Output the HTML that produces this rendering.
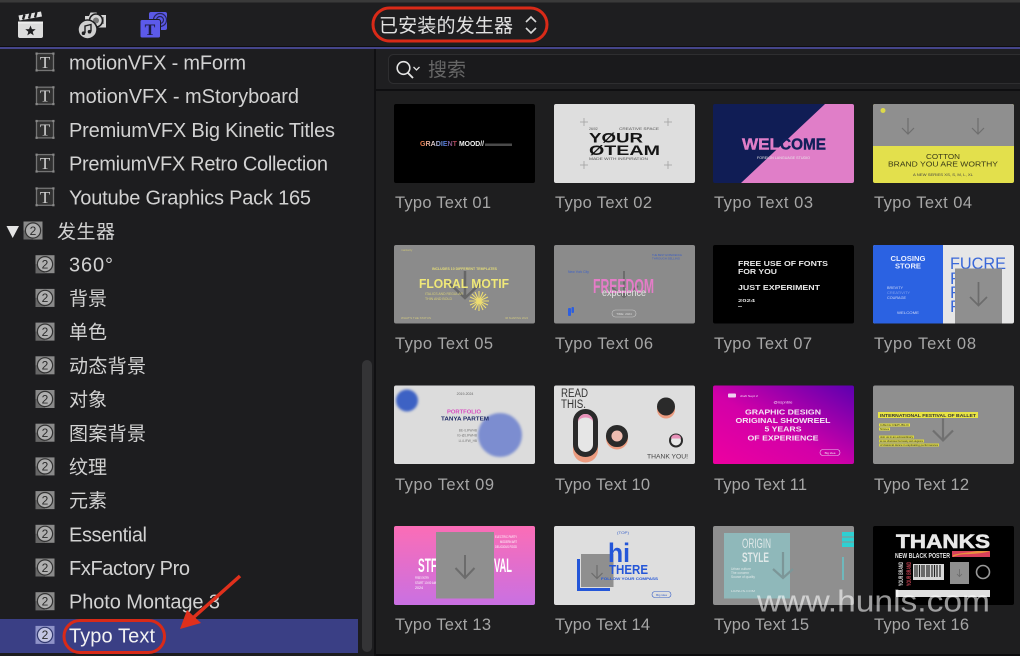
<!DOCTYPE html>
<html lang="zh"><head><meta charset="utf-8"><title>Generators</title>
<style>
html,body{margin:0;padding:0;background:#1c1c1e;width:1020px;height:656px;overflow:hidden}
svg{display:block}
text{font-family:"Liberation Sans","Noto Sans CJK SC",sans-serif}
.r{font-size:20px;fill:#d2d2d2}
.c{font-size:19px;fill:#d2d2d2;font-family:"Liberation Sans","Noto Sans CJK SC",sans-serif}
.l{font-size:16.500px;fill:#a6a6a6}
.two{font-size:12px;fill:#2c2c2c;text-anchor:middle}
.tt{font-family:"Liberation Serif",serif;font-size:17px;fill:#cfcfcf;text-anchor:middle}
.b{font-weight:bold}
.m{text-anchor:middle}
</style></head><body>
<svg width="1020" height="656" viewBox="0 0 1020 656" xmlns="http://www.w3.org/2000/svg">
<defs>
<g id="gen"><rect x="-9.500" y="-9" width="19" height="18" fill="#8a8a8a"/><rect x="-9.500" y="0" width="9.500" height="9" fill="#686868"/><circle r="7.600" fill="#b0b0b0" stroke="#333" stroke-width="1.200"/></g>
<g id="tf"><rect x="-8.500" y="-8.500" width="17" height="17" fill="#303030" stroke="#747474" stroke-width="1.300"/><g fill="#8a8a8a"><rect x="-9.500" y="-9.500" width="2.200" height="2.200"/><rect x="7.300" y="-9.500" width="2.200" height="2.200"/><rect x="-9.500" y="7.300" width="2.200" height="2.200"/><rect x="7.300" y="7.300" width="2.200" height="2.200"/></g></g>
<filter id="bl"><feGaussianBlur stdDeviation="1.400"/></filter>
<linearGradient id="g11" x1="0" y1="1" x2="1" y2="0"><stop offset="0" stop-color="#ee00a0"/><stop offset=".45" stop-color="#d200a8"/><stop offset="1" stop-color="#5c00b0"/></linearGradient>
<linearGradient id="g13" x1="0" y1="0" x2="0" y2="1"><stop offset="0" stop-color="#fb6db6"/><stop offset="1" stop-color="#c970e2"/></linearGradient>
<linearGradient id="gr" x1="0" y1="0" x2="1" y2="0"><stop offset="0" stop-color="#e8703a"/><stop offset=".35" stop-color="#e0d0d0"/><stop offset=".65" stop-color="#4a78d8"/><stop offset="1" stop-color="#c03a3a"/></linearGradient>
</defs>

<rect width="1020" height="656" fill="#1d1d1f"/>
<!-- top bar -->
<rect width="1020" height="47" fill="#1e1e20"/>
<rect width="1020" height="2.500" fill="#3a3a3a"/>
<rect y="46" width="1020" height="1.500" fill="#0e0e10"/>
<rect y="47" width="1020" height="2" fill="#45458a"/>

<!-- clapper -->
<path d="M18.500 15.500L41 11.500L42 16.500L19.500 20.500Z" fill="#e2e2e2"/>
<path d="M23 19.500l1.500-5M29 18.500l1.500-5.500M35 17.500l1.500-5.500" stroke="#1e1e20" stroke-width="2.300" fill="none"/>
<path d="M18 23.500H43V36a2 2 0 0 1-2 2H20a2 2 0 0 1-2-2Z" fill="#dcdcdc"/>
<rect x="18" y="21.500" width="25" height="2" fill="#eee"/>
<path d="M30.500 25.500l1.400 3.600 3.800.2-3 2.400 1 3.700-3.200-2.100-3.200 2.100 1-3.700-3-2.400 3.800-.2Z" fill="#1e1e20"/>
<!-- photos / music -->
<path d="M85 16h4l1.500-3.500h6L98 15h8v12.500H85Z" fill="#d4d4d4"/>
<rect x="101.500" y="17" width="2.500" height="7" fill="#888"/>
<circle cx="96" cy="20.500" r="6.500" fill="#d4d4d4" stroke="#1e1e20" stroke-width="1.600"/>
<circle cx="96" cy="20.500" r="3" fill="#777"/>
<circle cx="87.500" cy="29.500" r="9.500" fill="#cfcfcf" stroke="#1e1e20" stroke-width="1.500"/>
<path d="M85 33V26l6-1.500V31.500" fill="none" stroke="#1e1e20" stroke-width="1.400"/>
<circle cx="83.500" cy="33.200" r="1.800" fill="#1e1e20"/><circle cx="89.500" cy="31.700" r="1.800" fill="#1e1e20"/>
<!-- titles / generators -->
<rect x="149" y="12" width="18" height="18" rx="2" fill="#5a58e4"/>
<circle cx="160" cy="20" r="6.500" fill="none" stroke="#26265e" stroke-width="1.200"/>
<circle cx="160" cy="20" r="3.500" fill="none" stroke="#26265e" stroke-width="1.200"/>
<rect x="140" y="19.500" width="20.500" height="18.500" rx="2" fill="#5c5aea" stroke="#1e1e20" stroke-width="1"/>
<text x="150" y="35" class="b" style="font-family:'Liberation Serif',serif;font-size:16px;fill:#1c1c40;text-anchor:middle">T</text>

<!-- header title -->
<text x="379" y="32" class="c" style="fill:#e2e2e2" textLength="134">已安装的发生器</text>
<path d="M526 22l5-5 5 5M526 28l5 5 5-5" fill="none" stroke="#d8d8d8" stroke-width="1.600"/>
<rect x="373" y="8" width="174" height="33" rx="16.500" fill="none" stroke="#d92a18" stroke-width="3"/>

<!-- sidebar -->
<rect y="619" width="358" height="34" fill="#3a3f85"/>
<rect x="362" y="360" width="10" height="292" rx="5" fill="#343436"/>
<rect x="374" y="49" width="2" height="607" fill="#101012"/>

<g transform="translate(45,62)"><use href="#tf"/><text y="6" class="tt">T</text></g>
<g transform="translate(45,95.700)"><use href="#tf"/><text y="6" class="tt">T</text></g>
<g transform="translate(45,129.400)"><use href="#tf"/><text y="6" class="tt">T</text></g>
<g transform="translate(45,163.100)"><use href="#tf"/><text y="6" class="tt">T</text></g>
<g transform="translate(45,196.800)"><use href="#tf"/><text y="6" class="tt">T</text></g>
<text x="69" y="69.500" class="r" textLength="177">motionVFX - mForm</text>
<text x="69" y="103.200" class="r" textLength="230">motionVFX - mStoryboard</text>
<text x="69" y="136.900" class="r" textLength="266">PremiumVFX Big Kinetic Titles</text>
<text x="69" y="170.600" class="r" textLength="259">PremiumVFX Retro Collection</text>
<text x="69" y="204.300" class="r" textLength="242">Youtube Graphics Pack 165</text>

<path d="M6.500 226H19L12.700 238Z" fill="#e4e4e4"/>
<g transform="translate(33,230.500)"><use href="#gen"/><text y="4.300" class="two">2</text></g>
<text x="57" y="238" class="c" textLength="58">发生器</text>

<g transform="translate(45,264.200)"><use href="#gen"/><text y="4.300" class="two">2</text></g>
<g transform="translate(45,297.900)"><use href="#gen"/><text y="4.300" class="two">2</text></g>
<g transform="translate(45,331.600)"><use href="#gen"/><text y="4.300" class="two">2</text></g>
<g transform="translate(45,365.300)"><use href="#gen"/><text y="4.300" class="two">2</text></g>
<g transform="translate(45,399)"><use href="#gen"/><text y="4.300" class="two">2</text></g>
<g transform="translate(45,432.700)"><use href="#gen"/><text y="4.300" class="two">2</text></g>
<g transform="translate(45,466.400)"><use href="#gen"/><text y="4.300" class="two">2</text></g>
<g transform="translate(45,500.100)"><use href="#gen"/><text y="4.300" class="two">2</text></g>
<g transform="translate(45,533.800)"><use href="#gen"/><text y="4.300" class="two">2</text></g>
<g transform="translate(45,567.500)"><use href="#gen"/><text y="4.300" class="two">2</text></g>
<g transform="translate(45,601.200)"><use href="#gen"/><text y="4.300" class="two">2</text></g>
<g transform="translate(45,634.900)"><rect x="-9.500" y="-9" width="19" height="18" fill="#8f93c8"/><circle r="7.600" fill="#c4c6e4" stroke="#333a70" stroke-width="1.200"/><text y="4.300" class="two">2</text></g>

<text x="69" y="271.700" class="r" textLength="44">360°</text>
<text x="69" y="305" class="c" textLength="38">背景</text>
<text x="69" y="338.700" class="c" textLength="38">单色</text>
<text x="69" y="372.400" class="c" textLength="77">动态背景</text>
<text x="69" y="406.100" class="c" textLength="38">对象</text>
<text x="69" y="439.800" class="c" textLength="77">图案背景</text>
<text x="69" y="473.500" class="c" textLength="38">纹理</text>
<text x="69" y="507.200" class="c" textLength="38">元素</text>
<text x="69" y="541.300" class="r" textLength="78">Essential</text>
<text x="69" y="575" class="r" textLength="121">FxFactory Pro</text>
<text x="69" y="608.700" class="r" textLength="151">Photo Montage 3</text>
<text x="69" y="642.400" class="r" style="fill:#f2f2f2" textLength="86">Typo Text</text>

<rect x="64" y="620.500" width="100.500" height="32" rx="16" fill="none" stroke="#d92a18" stroke-width="3"/>
<path d="M240 576L194 617" stroke="#e0301c" stroke-width="3.500" fill="none"/>
<path d="M180 629L187 610L201 623Z" fill="#e0301c"/>

<!-- search row -->
<rect x="376" y="49" width="644" height="40" fill="#1f1f21"/>
<rect x="388.500" y="54.500" width="640" height="29" rx="5" fill="#1a1a1c" stroke="#2e2e30"/>
<circle cx="403.500" cy="68" r="6.300" fill="none" stroke="#e4e4e4" stroke-width="1.600"/>
<path d="M408 73l5 5" stroke="#e4e4e4" stroke-width="1.900"/>
<path d="M413.500 67l3 3 3-3" fill="none" stroke="#dedede" stroke-width="1.300"/>
<text x="428" y="76" class="c" style="fill:#666" textLength="38">搜索</text>
<rect x="376" y="89" width="644" height="2" fill="#0f0f11"/>
<rect x="376" y="91" width="644" height="563" fill="#1e1e1f"/>
<rect x="376" y="654" width="644" height="2" fill="#0c0c0e"/>

<!-- 01 -->
<g transform="translate(394,104)"><rect width="141" height="79" rx="2" fill="#000"/>
<text x="26" y="42" class="b" style="font-size:7.500px;fill:url(#gr)" textLength="37" lengthAdjust="spacingAndGlyphs">GRADIENT</text>
<text x="65" y="42" class="b" style="font-size:7.500px;fill:#eee" textLength="25" lengthAdjust="spacingAndGlyphs">MOOD//</text>
<rect x="91" y="39.500" width="27" height="2.500" fill="#4a4a4a"/></g>
<text x="395" y="208" class="l" textLength="96">Typo Text 01</text>

<!-- 02 -->
<g transform="translate(554,104)"><rect width="141" height="79" rx="2" fill="#dedede"/>
<path d="M26 18h8M30 14v8M110 18h8M114 14v8M26 61h8M30 57v8M110 61h8M114 57v8" stroke="#a0a0a0" stroke-width=".8"/>
<text x="35" y="26" style="font-size:3.500px;fill:#555">26/02</text><text x="65" y="26" style="font-size:3.500px;fill:#555" textLength="40" lengthAdjust="spacingAndGlyphs">CREATIVE SPACE</text>
<text x="35" y="38.500" class="b" style="font-size:14px;fill:#151515" textLength="54" lengthAdjust="spacingAndGlyphs">YØUR</text>
<text x="35" y="51" class="b" style="font-size:14px;fill:#151515" textLength="71" lengthAdjust="spacingAndGlyphs">ØTEAM</text>
<text x="35" y="56" style="font-size:3.500px;fill:#555" textLength="59" lengthAdjust="spacingAndGlyphs">MADE WITH INSPIRATION</text></g>
<text x="555" y="208" class="l" textLength="97">Typo Text 02</text>

<!-- 03 -->
<g transform="translate(713,104)"><rect width="141" height="79" rx="2" fill="#101d55"/>
<path d="M112 0H139a2 2 0 0 1 2 2V77a2 2 0 0 1-2 2H28Z" fill="#e07ec8"/>
<text x="29" y="45.500" class="b" style="font-size:16px;fill:#e07ec8;stroke:#e07ec8;stroke-width:.4" textLength="38" lengthAdjust="spacingAndGlyphs">WEL</text>
<text x="67" y="45.500" class="b" style="font-size:16px;fill:#12205a;stroke:#12205a;stroke-width:.4" textLength="46" lengthAdjust="spacingAndGlyphs">COME</text>
<text x="44" y="55" style="font-size:3.500px;fill:#e8e8e8" textLength="53" lengthAdjust="spacingAndGlyphs">FOREIGN LANGUAGE STUDIO</text></g>
<text x="714" y="208" class="l" textLength="99">Typo Text 03</text>

<!-- 04 -->
<g transform="translate(873,104)"><rect width="141" height="79" rx="2" fill="#e3e04c"/>
<path d="M0 42V2a2 2 0 0 1 2-2H139a2 2 0 0 1 2 2V42Z" fill="#8f8f8f"/>
<circle cx="10" cy="6.500" r="2.500" fill="#dcd94a"/>
<path d="M35 14V30M29 24l6 6 6-6M105 14V30M99 24l6 6 6-6" fill="none" stroke="#6e6e6e" stroke-width="1.200"/>
<text x="70" y="55" class="m" style="font-size:7px;fill:#3a3a18" textLength="34" lengthAdjust="spacingAndGlyphs">COTTON</text>
<text x="70" y="62.500" class="m" style="font-size:7.500px;fill:#3a3a18" textLength="110" lengthAdjust="spacingAndGlyphs">BRAND YOU ARE WORTHY</text>
<text x="70" y="72" class="m" style="font-size:3.500px;fill:#444" textLength="60" lengthAdjust="spacingAndGlyphs">A NEW SERIES XS, S, M, L, XL</text></g>
<text x="874" y="208" class="l" textLength="98">Typo Text 04</text>

<!-- 05 -->
<g transform="translate(394,245)"><rect width="141" height="78.500" rx="2" fill="#8b8b8b"/>
<path d="M71 26V53M54 37l17 16 17-16" fill="none" stroke="#666" stroke-width="2.500"/>
<text x="38" y="25" class="b" style="font-size:3.500px;fill:#e4dc78" textLength="65" lengthAdjust="spacingAndGlyphs">INCLUDES 10 DIFFERENT TEMPLATES</text>
<text x="25" y="43" class="b" style="font-size:12.500px;fill:#f0e878" textLength="90" lengthAdjust="spacingAndGlyphs">FLORAL MOTIF</text>
<text x="31" y="50" style="font-size:3.500px;fill:#d8d078" textLength="38" lengthAdjust="spacingAndGlyphs">ITALICS AND REGULAR</text>
<text x="31" y="55" style="font-size:3.500px;fill:#d8d078" textLength="27" lengthAdjust="spacingAndGlyphs">THIN AND BOLD</text>
<g stroke="#eedd70" stroke-width="1.100"><path d="M85 46V66M75 56H95M78 49l14 14M92 49l-14 14M81 47l8 18M89 47l-8 18M76 52l18 8M94 52l-18 8"/></g>
<text x="7" y="6" style="font-size:3px;fill:#ccc478">marketly</text>
<text x="7" y="74" style="font-size:3px;fill:#d0c880" textLength="30" lengthAdjust="spacingAndGlyphs">WHAT'S THE STATUS</text>
<text x="111" y="74" style="font-size:3px;fill:#d0c880" textLength="23" lengthAdjust="spacingAndGlyphs">IM SHAPING 2024</text></g>
<text x="395" y="349" class="l" textLength="98">Typo Text 05</text>

<!-- 06 -->
<g transform="translate(554,245)"><rect width="141" height="78.500" rx="2" fill="#8b8b8b"/>
<path d="M70 26V52M56 41l14 11 14-11" fill="none" stroke="#6c6c6c" stroke-width="2"/>
<text x="39" y="48" class="b" style="font-size:20px;fill:#e57cc8" textLength="61" lengthAdjust="spacingAndGlyphs">FREEDOM</text>
<text x="48" y="51" style="font-size:10px;fill:#e4e4e4" textLength="44" lengthAdjust="spacingAndGlyphs">experience</text>
<text x="14" y="28" style="font-size:3.500px;fill:#3f62c8" textLength="21" lengthAdjust="spacingAndGlyphs">New York City</text>
<text x="98" y="11" style="font-size:2.800px;fill:#4060c0" textLength="30" lengthAdjust="spacingAndGlyphs">THE BEST EXPERIENCE</text>
<text x="98" y="14.500" style="font-size:2.800px;fill:#4060c0" textLength="28" lengthAdjust="spacingAndGlyphs">THROUGH SELLING</text>
<rect x="14" y="63" width="3" height="8" rx="1" fill="#2d5fe0"/><rect x="17.500" y="62" width="2.500" height="6" rx="1" fill="#2d5fe0"/>
<rect x="58" y="65" width="24" height="7" rx="3.500" fill="none" stroke="#c8c8c8" stroke-width=".6"/>
<text x="70" y="70" class="m" style="font-size:3px;fill:#ddd">TIME: 2024</text></g>
<text x="555" y="349" class="l" textLength="98">Typo Text 06</text>

<!-- 07 -->
<g transform="translate(713,245)"><rect width="141" height="78.500" rx="2" fill="#000"/>
<text x="25" y="21" class="b" style="font-size:7px;fill:#e8e8e8" textLength="90" lengthAdjust="spacingAndGlyphs">FREE USE OF FONTS</text>
<text x="25" y="29" class="b" style="font-size:7px;fill:#e8e8e8" textLength="39" lengthAdjust="spacingAndGlyphs">FOR YOU</text>
<text x="25" y="45" class="b" style="font-size:7px;fill:#e8e8e8" textLength="82" lengthAdjust="spacingAndGlyphs">JUST EXPERIMENT</text>
<text x="25" y="57" class="b" style="font-size:4.500px;fill:#ddd" textLength="17" lengthAdjust="spacingAndGlyphs">2024</text>
<rect x="25" y="61" width="4" height=".8" fill="#bbb"/></g>
<text x="714" y="349" class="l" textLength="98">Typo Text 07</text>

<!-- 08 -->
<g transform="translate(873,245)"><rect width="141" height="78.500" rx="2" fill="#e6e6e6"/>
<path d="M2 0H70V78.500H2a2 2 0 0 1-2-2V2a2 2 0 0 1 2-2Z" fill="#2b62e2"/>
<text x="35" y="16" class="m b" style="font-size:7px;fill:#e8eeff" textLength="35" lengthAdjust="spacingAndGlyphs">CLOSING</text>
<text x="35" y="23.500" class="m b" style="font-size:7px;fill:#e8eeff" textLength="26" lengthAdjust="spacingAndGlyphs">STORE</text>
<text x="14" y="44" style="font-size:3.500px;fill:#cfd9f8" textLength="16" lengthAdjust="spacingAndGlyphs">BREVITY</text>
<text x="14" y="49" style="font-size:3.500px;fill:#7ea0f0" textLength="23" lengthAdjust="spacingAndGlyphs">CREATIVITY</text>
<text x="14" y="54" style="font-size:3.500px;fill:#cfd9f8" textLength="19" lengthAdjust="spacingAndGlyphs">COURAGE</text>
<text x="35" y="69" class="m" style="font-size:3.500px;fill:#cfd9f8" textLength="22" lengthAdjust="spacingAndGlyphs">WELCOME</text>
<text x="77" y="24" style="font-size:17px;fill:#3a68d8" textLength="56" lengthAdjust="spacingAndGlyphs">FUCRE</text>
<text x="77" y="39" style="font-size:17px;fill:#3a68d8">F</text><text x="77" y="53" style="font-size:17px;fill:#3a68d8">F</text><text x="77" y="67" style="font-size:17px;fill:#3a68d8">F</text>
<rect x="82" y="23.500" width="47" height="55" fill="#8f8f8f"/>
<path d="M105.500 37V60M97 52l8.500 8.500 8.500-8.500" fill="none" stroke="#6c6c6c" stroke-width="1.700"/></g>
<text x="874" y="349" class="l" textLength="102">Typo Text 08</text>

<!-- 09 -->
<g transform="translate(394,385.500)"><rect width="141" height="78.500" rx="2" fill="#dcdcdc"/>
<circle cx="13" cy="15" r="11" fill="#3c62c4" filter="url(#bl)"/>
<circle cx="106" cy="49.500" r="22" fill="#7b8dd0" filter="url(#bl)"/>
<text x="71" y="9.500" class="m" style="font-size:3.500px;fill:#666">2019-2024</text>
<text x="70" y="28" class="m b" style="font-size:5.500px;fill:#d84cc0" textLength="34" lengthAdjust="spacingAndGlyphs">PORTFOLIO</text>
<text x="71" y="35" class="m b" style="font-size:5.500px;fill:#1e2a66" textLength="48" lengthAdjust="spacingAndGlyphs">TANYA PARTEM</text>
<text x="83" y="46" style="font-size:3.200px;fill:#777;text-anchor:end">BE-/LIFWHB</text>
<text x="83" y="51" style="font-size:3.200px;fill:#777;text-anchor:end">IG-@LIFWHB</text>
<text x="83" y="56.500" style="font-size:3.200px;fill:#777;text-anchor:end">LI-/LIFW_HB</text></g>
<text x="395" y="490" class="l" textLength="99">Typo Text 09</text>

<!-- 10 -->
<g transform="translate(554,385.500)"><rect width="141" height="78.500" rx="2" fill="#dedede"/>
<text x="7" y="11.500" style="font-size:11.500px;fill:#333" textLength="27" lengthAdjust="spacingAndGlyphs">READ</text>
<text x="7" y="22.500" style="font-size:11.500px;fill:#333" textLength="25" lengthAdjust="spacingAndGlyphs">THIS.</text>
<rect x="19" y="28" width="25" height="49" rx="12.500" fill="#ec9c80"/>
<rect x="21.500" y="26" width="20" height="43" rx="10" fill="#e6e6e6" stroke="#2a2a2a" stroke-width="5"/>
<path d="M24 36a7.500 7.500 0 0 1 15 0v1a7.500 5 0 0 0-15 0Z" fill="#e890b8"/>
<circle cx="63" cy="53" r="11" fill="#ec9c80"/>
<circle cx="63" cy="50.500" r="8.300" fill="#eebcb0" stroke="#2a2a2a" stroke-width="5.500"/>
<circle cx="112" cy="24" r="9" fill="#ec9c80"/><circle cx="112" cy="21" r="9" fill="#2a2a2a"/>
<circle cx="122" cy="55" r="6" fill="#e8e8e8" stroke="#2a2a2a" stroke-width="2"/>
<path d="M117 53a5 4 0 0 1 10 0Z" fill="#e890b8"/>
<text x="134" y="73" style="font-size:6.500px;fill:#444;text-anchor:end" textLength="41" lengthAdjust="spacingAndGlyphs">THANK YOU!</text></g>
<text x="555" y="490" class="l" textLength="95">Typo Text 10</text>

<!-- 11 -->
<g transform="translate(713,385.500)"><rect width="141" height="78.500" rx="2" fill="url(#g11)"/>
<rect x="15" y="8" width="8" height="4" rx="1" fill="#f0d0f0"/>
<text x="27" y="11.500" style="font-size:3px;fill:#f4d0f4" textLength="18" lengthAdjust="spacingAndGlyphs">draft Sept 2</text>
<text x="70" y="18" class="m" style="font-size:3.500px;fill:#f6d8f6" textLength="19" lengthAdjust="spacingAndGlyphs">@nspnble</text>
<text x="70" y="29" class="m b" style="font-size:7.500px;fill:#f4e4f4" textLength="76" lengthAdjust="spacingAndGlyphs">GRAPHIC DESIGN</text>
<text x="70" y="37.500" class="m b" style="font-size:7.500px;fill:#f4e4f4" textLength="95" lengthAdjust="spacingAndGlyphs">ORIGINAL SHOWREEL</text>
<text x="70" y="46" class="m b" style="font-size:7.500px;fill:#f4e4f4" textLength="37" lengthAdjust="spacingAndGlyphs">5 YEARS</text>
<text x="70" y="55" class="m b" style="font-size:7.500px;fill:#f4e4f4" textLength="71" lengthAdjust="spacingAndGlyphs">OF EXPERIENCE</text>
<rect x="107" y="64" width="20" height="6" rx="3" fill="none" stroke="#e8c8f0" stroke-width=".6"/>
<text x="117" y="68.500" class="m" style="font-size:3px;fill:#f4e0f4">Big idea</text></g>
<text x="714" y="490" class="l" textLength="93">Typo Text 11</text>

<!-- 12 -->
<g transform="translate(873,385.500)"><rect width="141" height="78.500" rx="2" fill="#8f8f8f"/>
<path d="M70 33V55M60 45l10 10 10-10" fill="none" stroke="#707070" stroke-width="2.200"/>
<rect x="5" y="26.500" width="100" height="6" fill="#e8e444"/>
<text x="7" y="31.500" class="b" style="font-size:4.800px;fill:#333" textLength="96" lengthAdjust="spacingAndGlyphs">INTERNATIONAL FESTIVAL OF BALLET</text>
<rect x="6" y="38" width="31" height="3" fill="#e8e444"/><rect x="6" y="42" width="11" height="3" fill="#e8e444"/>
<rect x="6" y="50" width="35" height="3" fill="#d8d440"/><rect x="6" y="54" width="45" height="3" fill="#d8d440"/><rect x="6" y="58" width="60" height="3" fill="#d8d440"/>
<text x="7" y="40.500" style="font-size:2.800px;fill:#333" textLength="29" lengthAdjust="spacingAndGlyphs">CZECH REPUBLIC</text>
<text x="7" y="44.500" style="font-size:2.800px;fill:#333" textLength="9" lengthAdjust="spacingAndGlyphs">Nitava</text>
<text x="7" y="52.500" style="font-size:2.800px;fill:#333" textLength="33" lengthAdjust="spacingAndGlyphs">Join us in an extraordinary</text>
<text x="7" y="56.500" style="font-size:2.800px;fill:#333" textLength="43" lengthAdjust="spacingAndGlyphs">as we showcase the beauty and elegance</text>
<text x="7" y="60.500" style="font-size:2.800px;fill:#333" textLength="58" lengthAdjust="spacingAndGlyphs">of classical dance in captivating performances</text></g>
<text x="874" y="490" class="l" textLength="95">Typo Text 12</text>

<!-- 13 -->
<g transform="translate(394,526)"><rect width="141" height="79" rx="2" fill="url(#g13)"/>
<text x="24" y="46" class="b" style="font-size:19px;fill:#fff" textLength="19" lengthAdjust="spacingAndGlyphs">STF</text>
<text x="100" y="46" class="b" style="font-size:19px;fill:#fff" textLength="18" lengthAdjust="spacingAndGlyphs">VAL</text>
<text x="123" y="12" style="font-size:3.500px;fill:#fff;text-anchor:end" textLength="22" lengthAdjust="spacingAndGlyphs">ELECTRIC PARTY</text>
<text x="123" y="17" style="font-size:3.500px;fill:#fff;text-anchor:end" textLength="17" lengthAdjust="spacingAndGlyphs">MODERN ART</text>
<text x="123" y="22" style="font-size:3.500px;fill:#fff;text-anchor:end" textLength="22" lengthAdjust="spacingAndGlyphs">DELICIOUS FOOD</text>
<text x="21" y="53" style="font-size:3.500px;fill:#fff" textLength="14" lengthAdjust="spacingAndGlyphs">FREE ENTRY</text>
<text x="21" y="58" style="font-size:3.500px;fill:#fff" textLength="21" lengthAdjust="spacingAndGlyphs">START 10:00 AM</text>
<text x="21" y="63" style="font-size:3.500px;fill:#fff" textLength="8" lengthAdjust="spacingAndGlyphs">2024</text>
<rect x="42" y="6" width="58" height="66.500" fill="#8f8f8f"/>
<path d="M71 29V52M61.500 42l9.500 10 9.500-10" fill="none" stroke="#6c6c6c" stroke-width="2"/></g>
<text x="395" y="630" class="l" textLength="96">Typo Text 13</text>

<!-- 14 -->
<g transform="translate(554,526)"><rect width="141" height="79" rx="2" fill="#dedede"/>
<path d="M23 33H26V62H56V65H23Z" fill="#2456d8"/>
<rect x="27" y="28" width="32.500" height="33" fill="#8f8f8f"/>
<path d="M43 39V52M37.500 47l5.500 5.500 5.500-5.500" fill="none" stroke="#6c6c6c" stroke-width="1.200"/>
<text x="69" y="8" class="m" style="font-size:4px;fill:#3a62c8" textLength="12" lengthAdjust="spacingAndGlyphs">(TOP)</text>
<text x="54" y="36" class="b" style="font-size:27px;fill:#2456d8" textLength="22" lengthAdjust="spacingAndGlyphs">hi</text>
<text x="55" y="48" class="b" style="font-size:12.500px;fill:#2456d8" textLength="39" lengthAdjust="spacingAndGlyphs">THERE</text>
<text x="47" y="54" class="b" style="font-size:4px;fill:#2456d8" textLength="57" lengthAdjust="spacingAndGlyphs">FOLLOW YOUR COMPASS</text>
<rect x="98" y="65.500" width="19" height="6" rx="3" fill="none" stroke="#3a62c8" stroke-width=".6"/>
<text x="107.500" y="70" class="m" style="font-size:3px;fill:#3a62c8">Big idea</text></g>
<text x="555" y="630" class="l" textLength="95">Typo Text 14</text>

<!-- 15 -->
<g transform="translate(713,526)"><rect width="141" height="79" rx="2" fill="#8f8f8f"/>
<rect x="11" y="7" width="66" height="65.500" fill="#8fb8ba"/>
<path d="M70 26V52M60 43l10 9 10-9" fill="none" stroke="#7c9698" stroke-width="2.200"/>
<text x="29" y="22" style="font-size:14px;fill:#dfe8e8" textLength="29" lengthAdjust="spacingAndGlyphs">ORIGIN</text>
<text x="29" y="36" class="b" style="font-size:14px;fill:#dfe8e8" textLength="27" lengthAdjust="spacingAndGlyphs">STYLE</text>
<text x="18" y="44" style="font-size:3.500px;fill:#dfe8e8" textLength="20" lengthAdjust="spacingAndGlyphs">Urban culture</text>
<text x="18" y="48" style="font-size:3.500px;fill:#dfe8e8" textLength="18" lengthAdjust="spacingAndGlyphs">The concern</text>
<text x="18" y="52" style="font-size:3.500px;fill:#dfe8e8" textLength="24" lengthAdjust="spacingAndGlyphs">Source of quality</text>
<text x="18" y="66" style="font-size:3px;fill:#dfe8e8" textLength="24" lengthAdjust="spacingAndGlyphs">HUNLIS.COM</text>
<path d="M129 6H141V10.500H129ZM129 11.500H141V15.500H129ZM129 16.500H141V21H129Z" fill="#2ed0d2"/>
<rect x="129" y="31" width="2" height="23" fill="#6fb8bc"/></g>
<text x="714" y="630" class="l" textLength="95">Typo Text 15</text>

<!-- 16 -->
<g transform="translate(873,526)"><rect width="141" height="79" rx="2" fill="#000"/>
<text x="23" y="22" class="b" style="font-size:19.500px;fill:#e8e8e8;stroke:#e8e8e8;stroke-width:.6" textLength="94" lengthAdjust="spacingAndGlyphs">THANKS</text>
<text x="22" y="32" class="b" style="font-size:7.500px;fill:#e4e4e4" textLength="55" lengthAdjust="spacingAndGlyphs">NEW BLACK POSTER</text>
<path d="M79 25H117V31H79Z" fill="#d8405a"/><path d="M80 31c10-5 18-1 36-5.500v-.500H104C94 27 86 27 80 29Z" fill="#e89040"/>
<rect x="40" y="38" width="31" height="16" fill="#d8d8d8"/>
<path d="M42 39v12M44 39v12M46.500 39v12M49 39v12M51 39v12M54 39v12M56 39v12M59 39v12M61.500 39v12M64 39v12M67 39v12" stroke="#222" stroke-width="1.200"/>
<rect x="77" y="36" width="19" height="22" fill="#8f8f8f"/>
<path d="M86.500 43V50M84 48l2.500 2.500L89 48" fill="none" stroke="#6c6c6c" stroke-width=".8"/>
<circle cx="110" cy="46" r="6.500" fill="none" stroke="#999" stroke-width="1.600"/>
<text x="0" y="0" transform="translate(30,60) rotate(-90)" class="b" style="font-size:6px;fill:#ddd" textLength="24" lengthAdjust="spacingAndGlyphs">YOUR BRAND</text>
<text x="0" y="0" transform="translate(38,60) rotate(-90)" class="b" style="font-size:6px;fill:#c04050" textLength="24" lengthAdjust="spacingAndGlyphs">YOUR BRAND</text>
<rect x="23" y="64" width="94" height="7" fill="#e0e0e0"/></g>
<text x="874" y="630" class="l" textLength="95">Typo Text 16</text>

<!-- watermark -->
<text x="757" y="611.500" style="font-size:31px;fill:#fff;fill-opacity:.58" textLength="233" lengthAdjust="spacingAndGlyphs">www.hunls.com</text>
</svg>
</body></html>
